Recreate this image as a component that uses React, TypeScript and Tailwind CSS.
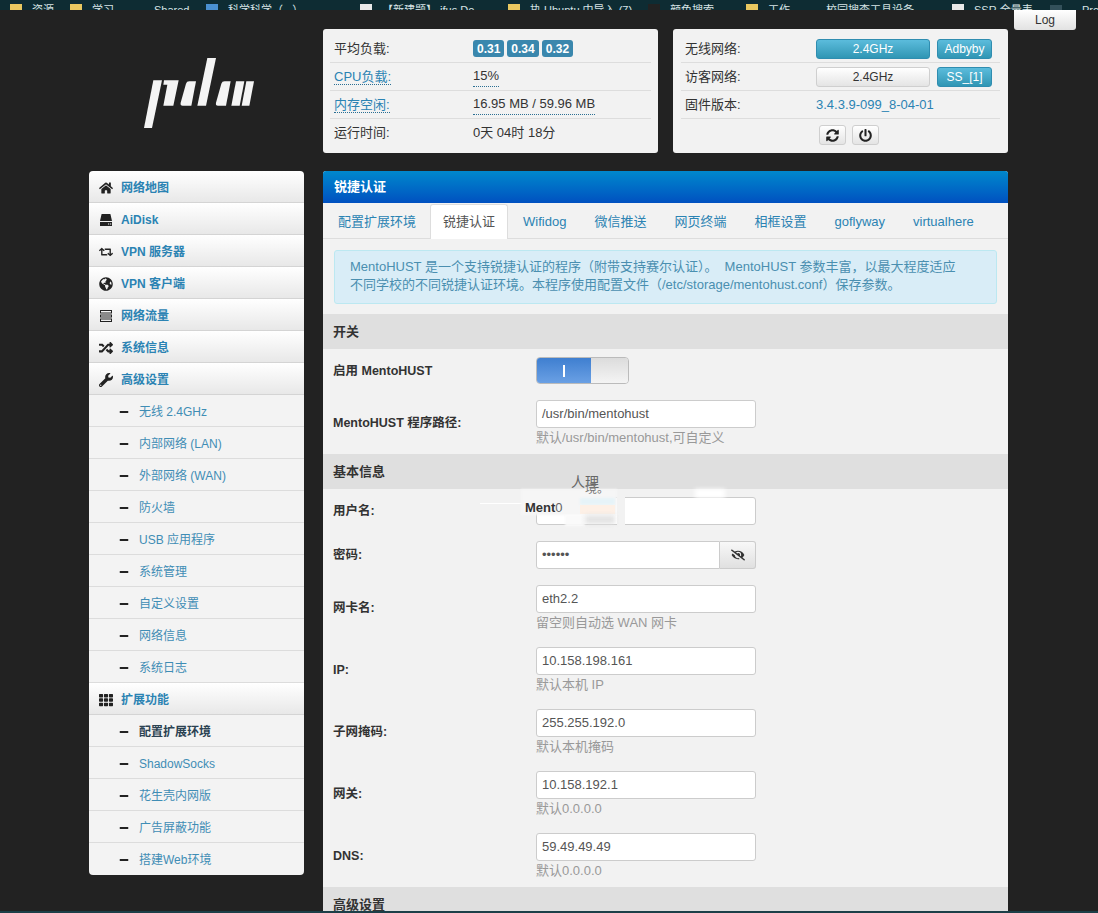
import {
  FaEyeSlash,
  FaGlobeAmericas,
  FaHome,
  FaMinus,
  FaPowerOff,
  FaRandom,
  FaRetweet,
  FaSyncAlt,
  FaTh,
  FaWrench,
} from "react-icons/fa";
import type { ReactNode } from "react";

const FONT = "font-['Liberation_Sans','Noto_Sans_CJK_SC',sans-serif]";

const bookmarks = [
  { w: "w-[60px]", color: "bg-[#e8c860]", label: "资源" },
  { w: "w-[84px]", color: "bg-[#e8c860]", label: "学习" },
  { w: "w-[52px]", color: "", label: "Shared" },
  { w: "w-[154px]", color: "bg-[#4a90d0]", label: "科学科学（...）" },
  { w: "w-[148px]", color: "bg-[#e8e8e8]", label: "【新建题】 ifus Do" },
  { w: "w-[140px]", color: "bg-[#e8c860]", label: "执 Ubuntu 中导入 (7)" },
  { w: "w-[98px]", color: "bg-[#222222]", label: "颜色搜索" },
  { w: "w-[80px]", color: "bg-[#e8c860]", label: "工作" },
  { w: "w-[126px]", color: "", label: "校园搜查工具设备" },
  { w: "w-[98px]", color: "bg-[#e8e8e8]", label: "SSR 全量表" },
  { w: "w-[32px]", color: "bg-[#33505a]", label: "" },
  { w: "w-[20px]", color: "", label: "Pro" },
];

const HddIcon = () => (
  <svg viewBox="0 0 14 14" className="h-[14px] w-[14px]" fill="currentColor">
    <path d="M2.6 1H11.4L13 8H1Z" />
    <path d="M1 9H13V13H1ZM9 10.4V11.6H10.2V10.4ZM11 10.4V11.6H12.2V10.4Z" fillRule="evenodd" />
  </svg>
);

const TasksIcon = () => (
  <svg viewBox="0 0 14 14" className="h-[14px] w-[14px]" fill="currentColor">
    <path
      d="M1 1H13V4.4H1ZM2 2V3.4H12V2ZM1 5.4H13V8.6H1ZM2 6.4V7.6H12V6.4ZM1 9.6H13V13H1ZM2 10.6V12H12V10.6Z"
      fillRule="evenodd"
    />
  </svg>
);

const topItems: { label: string; icon: ReactNode }[] = [
  { label: "网络地图", icon: <FaHome /> },
  { label: "AiDisk", icon: <HddIcon /> },
  { label: "VPN 服务器", icon: <FaRetweet /> },
  { label: "VPN 客户端", icon: <FaGlobeAmericas /> },
  { label: "网络流量", icon: <TasksIcon /> },
  { label: "系统信息", icon: <FaRandom /> },
  { label: "高级设置", icon: <FaWrench /> },
];

const advancedItems = [
  "无线 2.4GHz",
  "内部网络 (LAN)",
  "外部网络 (WAN)",
  "防火墙",
  "USB 应用程序",
  "系统管理",
  "自定义设置",
  "网络信息",
  "系统日志",
];

const extensionItems = ["配置扩展环境", "ShadowSocks", "花生壳内网版", "广告屏蔽功能", "搭建Web环境"];

const tabs = ["配置扩展环境", "锐捷认证", "Wifidog", "微信推送", "网页终端", "相框设置", "goflyway", "virtualhere"];

const NavTop = ({ label, icon }: { label: string; icon: ReactNode }) => (
  <div className="flex h-8 items-center border-b border-[#d4d4d4] bg-gradient-to-b from-white to-[#e8e8e8] pt-[2px] pl-[6px] text-[12px] font-bold text-[#2b83b3] last:border-b-0">
    <span className="mr-[4px] flex w-[22px] justify-center text-[14px] text-[#222]">{icon}</span>
    <span>{label}</span>
  </div>
);

const NavSub = ({ label, active }: { label: string; active?: boolean }) => (
  <div className="flex h-8 items-center border-b border-[#dcdcdc] bg-[#f3f3f3] pt-[2px] pl-[30px] text-[12px] text-[#3f8db5] last:border-b-0">
    <span className="flex w-[20px] text-[10px] text-[#222]">
      <FaMinus />
    </span>
    <span className={active ? "font-bold text-[#2b4252]" : ""}>{label}</span>
  </div>
);

const InfoRow = ({ label, children, link }: { label: string; children: ReactNode; link?: boolean }) => (
  <div className="flex h-[28px] items-center border-b border-[#dddddd] pl-[4px] last:border-b-0">
    <span
      className={
        link
          ? "w-[139px] shrink-0 text-[#2b83b3]"
          : "w-[139px] shrink-0 text-[#333]"
      }
    >
      {link ? <span className="border-b border-dotted border-[#2b6f93]">{label}</span> : label}
    </span>
    {children}
  </div>
);

const Badge = ({ children }: { children: ReactNode }) => (
  <span className="flex h-[17px] items-center rounded-[3px] bg-[#3a87ad] px-[4px] text-[12px] font-bold text-white">
    {children}
  </span>
);

const InfoButton = ({ children, w }: { children: ReactNode; w: string }) => (
  <button
    className={`flex h-[20px] items-center justify-center rounded-[3px] border border-[#2f8db0] bg-gradient-to-b from-[#5bbcdc] to-[#2f96b4] text-[12px] text-white ${w}`}
  >
    {children}
  </button>
);

const IconButton = ({ children }: { children: ReactNode }) => (
  <button className="flex h-[20px] w-[27px] items-center justify-center rounded-[3px] border border-[#cfcfcf] bg-gradient-to-b from-white to-[#e4e4e4] text-[13px] text-[#222]">
    {children}
  </button>
);

const SectionTitle = ({ children }: { children: ReactNode }) => (
  <div className="flex h-[35px] items-center bg-[#dfdfdf] pl-[10px] text-[13px] font-bold text-[#333]">
    {children}
  </div>
);

const Field = ({ label, value, help }: { label: string; value: string; help?: string }) => (
  <div className="flex items-center py-2 pl-[10px]">
    <label className="w-[203px] shrink-0 text-[12.5px] font-bold text-[#333]">{label}</label>
    <div>
      <div className="flex h-[28px] w-[220px] items-center rounded-[3px] border border-[#cccccc] bg-white px-[5px] text-[13px] text-[#555]">
        {value}
      </div>
      {help && <p className="mt-[1px] h-[17px] text-[13px] leading-[17px] text-[#999]">{help}</p>}
    </div>
  </div>
);

const Logo = () => (
  <svg viewBox="0 0 420 270" className="h-[90px] w-[140px]" fill="#f4f4f4">
    <path d="M70 100H96L66 243H42Z" />
    <path d="M102 100H146L130 176H100L112 113H100Z" />
    <path d="M168 110Q170 103 178 103H198L184 176H158Q150 176 152 167Z" />
    <path d="M232 33H258L228 176H202Z" />
    <path d="M274 110Q276 103 284 103H302L288 176H264Q256 176 258 167Z" />
    <path d="M318 103H343L329 176H304Z" />
    <path d="M349 103H372L358 176H335Z" />
  </svg>
);

export default function App() {
  return (
    <div className={`flex h-[913px] w-[1098px] flex-col overflow-hidden bg-[#222222] text-[13px] ${FONT}`}>
      {/* browser bookmarks bar, cut off at the top of the capture */}
      <div className="flex h-[10px] shrink-0 items-end overflow-hidden bg-[#0e2c33] pl-[10px] text-[11px] leading-[14px] text-[#d8e4e6]">
        {bookmarks.map((b) => (
          <div key={b.w + b.label} className={`flex shrink-0 translate-y-[7px] items-center gap-[10px] ${b.w}`}>
            {b.color && <span className={`h-[12px] w-[12px] shrink-0 ${b.color}`} />}
            {b.label && <span className="whitespace-nowrap">{b.label}</span>}
          </div>
        ))}
      </div>

      <div className="min-h-0 flex-1 overflow-hidden">
        <div className="flex h-[19px] justify-end pr-[22px]">
          <button className="h-[20px] w-[62px] shrink-0 rounded-b-[3px] bg-gradient-to-b from-white to-[#e2e2e2] text-[12px] text-[#333]">
            Log
          </button>
        </div>

        <div className="flex pl-[89px]">
          <div className="flex h-[124px] w-[234px] shrink-0 items-center pl-[41px] pt-[1px]">
            <Logo />
          </div>
          <div className="h-[124px] w-[335px] rounded-[3px] bg-[#f2f2f2] px-[7px] pt-[6px] text-[13px]">
            <InfoRow label="平均负载:">
              <div className="flex gap-[3px]">
                <Badge>0.31</Badge>
                <Badge>0.34</Badge>
                <Badge>0.32</Badge>
              </div>
            </InfoRow>
            <InfoRow label="CPU负载:" link>
              <span className="border-b border-dotted border-[#2b6f93] text-[#333]">15%</span>
            </InfoRow>
            <InfoRow label="内存空闲:" link>
              <span className="border-b border-dotted border-[#2b6f93] text-[#333]">16.95 MB / 59.96 MB</span>
            </InfoRow>
            <InfoRow label="运行时间:">
              <span className="text-[#333]">0天 04时 18分</span>
            </InfoRow>
          </div>
          <div className="ml-[15px] h-[124px] w-[335px] rounded-[3px] bg-[#f2f2f2] px-[8px] pt-[6px] text-[13px]">
            <InfoRow label="无线网络:">
              <div className="-ml-[8px] flex gap-[7px]">
                <InfoButton w="w-[114px]">2.4GHz</InfoButton>
                <InfoButton w="w-[55px]">Adbyby</InfoButton>
              </div>
            </InfoRow>
            <InfoRow label="访客网络:">
              <div className="-ml-[8px] flex gap-[7px]">
                <button className="flex h-[20px] w-[114px] items-center justify-center rounded-[3px] border border-[#cfcfcf] bg-gradient-to-b from-white to-[#e4e4e4] text-[12px] text-[#333]">
                  2.4GHz
                </button>
                <InfoButton w="w-[55px]">SS_[1]</InfoButton>
              </div>
            </InfoRow>
            <InfoRow label="固件版本:">
              <span className="-ml-[8px] text-[#2b83b3]">3.4.3.9-099_8-04-01</span>
            </InfoRow>
            <div className="flex justify-center gap-[6px] pt-[6px] pl-[17px]">
              <IconButton>
                <FaSyncAlt />
              </IconButton>
              <IconButton>
                <FaPowerOff />
              </IconButton>
            </div>
          </div>
        </div>

        <div className="mt-[18px] flex items-start pl-[89px]">
          <nav className="w-[215px] shrink-0 overflow-hidden rounded-[4px]">
            {topItems.map((item) => (
              <NavTop key={item.label} {...item} />
            ))}
            {advancedItems.map((label) => (
              <NavSub key={label} label={label} />
            ))}
            <NavTop label="扩展功能" icon={<FaTh />} />
            {extensionItems.map((label, i) => (
              <NavSub key={label} label={label} active={i === 0} />
            ))}
          </nav>

          <main className="ml-[19px] w-[685px] shrink-0 overflow-hidden rounded-t-[3px] bg-[#f2f2f2]">
            <div className="flex h-8 items-center bg-gradient-to-b from-[#0088cc] to-[#0050c0] pl-[11px] text-[13px] font-bold text-white">
              锐捷认证
            </div>
            <div className="flex h-[36px] items-end gap-[2px] border-b border-[#dddddd] pl-[2px]">
              {tabs.map((tab, i) => (
                <div
                  key={tab}
                  className={
                    tab === "锐捷认证"
                      ? "-mb-[1px] flex h-[35px] items-center rounded-t-[3px] border border-b-0 border-[#dddddd] bg-white px-[12px] text-[#555]"
                      : i === 0
                        ? "-mb-[1px] -mr-[1px] flex h-[35px] items-center border border-transparent px-[12px] text-[#2b83b3]"
                        : "-mb-[1px] flex h-[35px] items-center border border-transparent px-[12px] text-[#2b83b3]"
                  }
                >
                  {tab}
                </div>
              ))}
            </div>
            <div className="mx-[11px] mt-[11px] mb-[10px] h-[54px] rounded-[3px] border border-[#bce8f1] bg-[#d9edf7] px-[15px] py-[7px] text-[13px] leading-[18px] text-[#4a8fb0]">
              MentoHUST 是一个支持锐捷认证的程序（附带支持赛尔认证）。&nbsp;&nbsp;MentoHUST 参数丰富，以最大程度适应
              <br />
              不同学校的不同锐捷认证环境。本程序使用配置文件（/etc/storage/mentohust.conf）保存参数。
            </div>

            <SectionTitle>开关</SectionTitle>
            <div className="flex items-center pt-[8px] pb-2 pl-[10px]">
              <label className="w-[203px] shrink-0 pt-[1px] text-[12.5px] font-bold text-[#333]">启用 MentoHUST</label>
              <div className="flex h-[27px] w-[93px] overflow-hidden rounded-[4px] border border-[#bbbbbb]">
                <div className="flex w-[54px] items-center justify-center bg-gradient-to-b from-[#3f7fd0] to-[#6aa0e4]">
                  <span className="h-[12px] w-[2px] bg-white" />
                </div>
                <div className="flex-1 bg-gradient-to-b from-[#dcdcdc] to-[#f4f4f4]" />
              </div>
            </div>
            <Field label="MentoHUST 程序路径:" value="/usr/bin/mentohust" help="默认/usr/bin/mentohust,可自定义" />

            <SectionTitle>基本信息</SectionTitle>
            <div className="relative">
              <Field label="用户名:" value="" />
              {/* leftover frame of a fading page transition, lies over the username row */}
              <div className="absolute left-[157px] top-[14px] h-[1px] w-[45px] bg-white" />
              <div className="absolute left-[198px] top-[0px] h-[26px] w-[96px] bg-[#f6f6f6] blur-[1px]" />
              <div className="absolute left-[242px] top-[26px] h-[11px] w-[20px] bg-[#fafafa] blur-[1px]" />
              <div className="absolute left-[294px] top-[8px] h-[28px] w-[8px] bg-[#f2f2f2]" />
              <div className="absolute left-[372px] top-[0px] h-[9px] w-[30px] bg-white blur-[2px]" />
              <div className="absolute left-[257px] top-[9px] h-[7px] w-[35px] bg-[#e6f3f8] blur-[1px]" />
              <div className="absolute left-[257px] top-[16px] h-[9px] w-[35px] bg-[#fdf0e6]" />
              <div className="absolute left-[262px] top-[26px] h-[9px] w-[30px] bg-[#e4e4e4] blur-[2px]" />
              <div className="absolute left-[202px] top-[9px] text-[13px] font-bold text-[#333]">
                Ment<span className="font-normal text-[#666]">0</span>
              </div>
              <div className="absolute left-[248px] top-[-15px] text-[14px] leading-[16px] text-[#666]">人理</div>
              <div className="absolute left-[262px] top-[-7px] text-[12px] leading-[14px] text-[#777]">境。</div>
            </div>
            <div className="flex items-center py-2 pl-[10px]">
              <label className="w-[203px] shrink-0 text-[12.5px] font-bold text-[#333]">密码:</label>
              <div className="flex h-[28px] w-[220px]">
                <div className="flex flex-1 items-center rounded-l-[3px] border border-[#cccccc] bg-white px-[5px] text-[13px] text-[#555]">
                  ••••••
                </div>
                <div className="flex w-[36px] items-center justify-center rounded-r-[3px] border border-l-0 border-[#cccccc] bg-gradient-to-b from-[#f8f8f8] to-[#e0e0e0] text-[14px] text-[#333]">
                  <FaEyeSlash />
                </div>
              </div>
            </div>
            <Field label="网卡名:" value="eth2.2" help="留空则自动选 WAN 网卡" />
            <Field label="IP:" value="10.158.198.161" help="默认本机 IP" />
            <Field label="子网掩码:" value="255.255.192.0" help="默认本机掩码" />
            <Field label="网关:" value="10.158.192.1" help="默认0.0.0.0" />
            <Field label="DNS:" value="59.49.49.49" help="默认0.0.0.0" />
            <SectionTitle>高级设置</SectionTitle>
          </main>
        </div>
      </div>
      <div className="h-[2px] shrink-0 bg-[#1c3f48]" />
    </div>
  );
}
